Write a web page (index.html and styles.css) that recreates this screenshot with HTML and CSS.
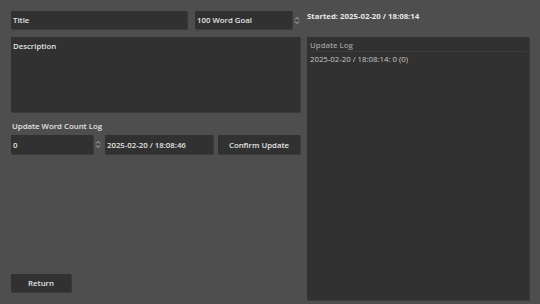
FILE: index.html
```html
<!DOCTYPE html>
<html lang="en">
<head>
  <meta charset="UTF-8" />
  <title>Word Count Tracker</title>
  <link rel="stylesheet" href="styles.css">
</head>
<body>
  <div class="app">
    <section class="left">
      <div class="top-row">
        <div class="field title-field">Title</div>
        <div class="spin-wrap">
          <div class="field goal-field">100 Word Goal</div>
          <svg class="spin" width="6" height="9" viewBox="0 0 6 9"><path d="M1 3.5 L3 1.5 L5 3.5 M1 5.5 L3 7.5 L5 5.5" fill="none" stroke="#b8b8b8" stroke-width="1"/></svg>
        </div>
      </div>
      <div class="field description">Description</div>
      <div class="label">Update Word Count Log</div>
      <div class="update-row">
        <div class="spin-wrap">
          <div class="field count-field">0</div>
          <svg class="spin" width="6" height="9" viewBox="0 0 6 9"><path d="M1 3.5 L3 1.5 L5 3.5 M1 5.5 L3 7.5 L5 5.5" fill="none" stroke="#b8b8b8" stroke-width="1"/></svg>
        </div>
        <div class="field date-field">2025-02-20 / 18:08:46</div>
        <button class="btn confirm-btn">Confirm Update</button>
      </div>
      <button class="btn return-btn">Return</button>
    </section>

    <section class="right">
      <div class="started">Started: 2025-02-20 / 18:08:14</div>
      <div class="log-panel">
        <div class="log-head">Update Log</div>
        <div class="log-entry">2025-02-20 / 18:08:14: 0 (0)</div>
      </div>
    </section>
  </div>
</body>
</html>
```

FILE: styles.css
```css
body {
  margin: 0;
  background: #4e4e4e;
  font-family: "Open Sans", "Noto Sans", sans-serif;
  font-size: 7.8px;
  color: #e2e2e2;
}
.app {
  display: grid;
  grid-template-columns: 289px 222px;
  column-gap: 7px;
  height: 304px;
  box-sizing: border-box;
  padding: 11px 11px 4px 11px;
}
.left {
  display: flex;
  flex-direction: column;
  padding-bottom: 8px;
}
.field {
  background: #313131;
  box-shadow: 1px 1px 0 #3a3a3a;
  box-sizing: border-box;
  padding: 0 2px;
  font-weight: 600;
  display: flex;
  align-items: center;
}
.top-row {
  display: flex;
  gap: 8px;
  height: 18px;
}
.title-field {
  width: 176px;
  height: 18px;
}
.spin-wrap {
  display: flex;
  align-items: center;
  gap: 2px;
}
.goal-field {
  width: 97px;
  height: 18px;
}
.spin {
  display: block;
}
.description {
  margin-top: 8px;
  height: 75px;
  align-items: flex-start;
  padding-top: 4px;
}
.label {
  margin-top: 9px;
  height: 14px;
  line-height: 10px;
  font-weight: 600;
  padding-left: 1px;
}
.update-row {
  display: flex;
  height: 19px;
}
.count-field {
  width: 82px;
  height: 19px;
}
.update-row .spin-wrap {
  margin-right: 4px;
}
.date-field {
  width: 108px;
  height: 19px;
  margin-right: 5px;
}
.btn {
  background: #313131;
  box-shadow: 1px 1px 0 #3a3a3a;
  border: none;
  color: #e2e2e2;
  font-family: inherit;
  font-size: 7.8px;
  font-weight: 600;
  padding: 0;
}
.confirm-btn {
  width: 82px;
  height: 19px;
}
.return-btn {
  margin-top: auto;
  width: 60px;
  height: 18px;
}
.right {
  display: flex;
  flex-direction: column;
}
.started {
  height: 26px;
  line-height: 10px;
  font-weight: 700;
  color: #e8e8e8;
}
.log-panel {
  flex: 1;
  background: #313131;
  box-shadow: 1px 1px 0 #3a3a3a;
  padding: 3px 3px;
}
.log-head {
  color: #9c9c9c;
  font-weight: 600;
  line-height: 10px;
  padding-bottom: 1px;
  border-bottom: 1px solid #3c3c3c;
}
.log-entry {
  color: #c8c8c8;
  margin-top: 2px;
  line-height: 11px;
}
```
